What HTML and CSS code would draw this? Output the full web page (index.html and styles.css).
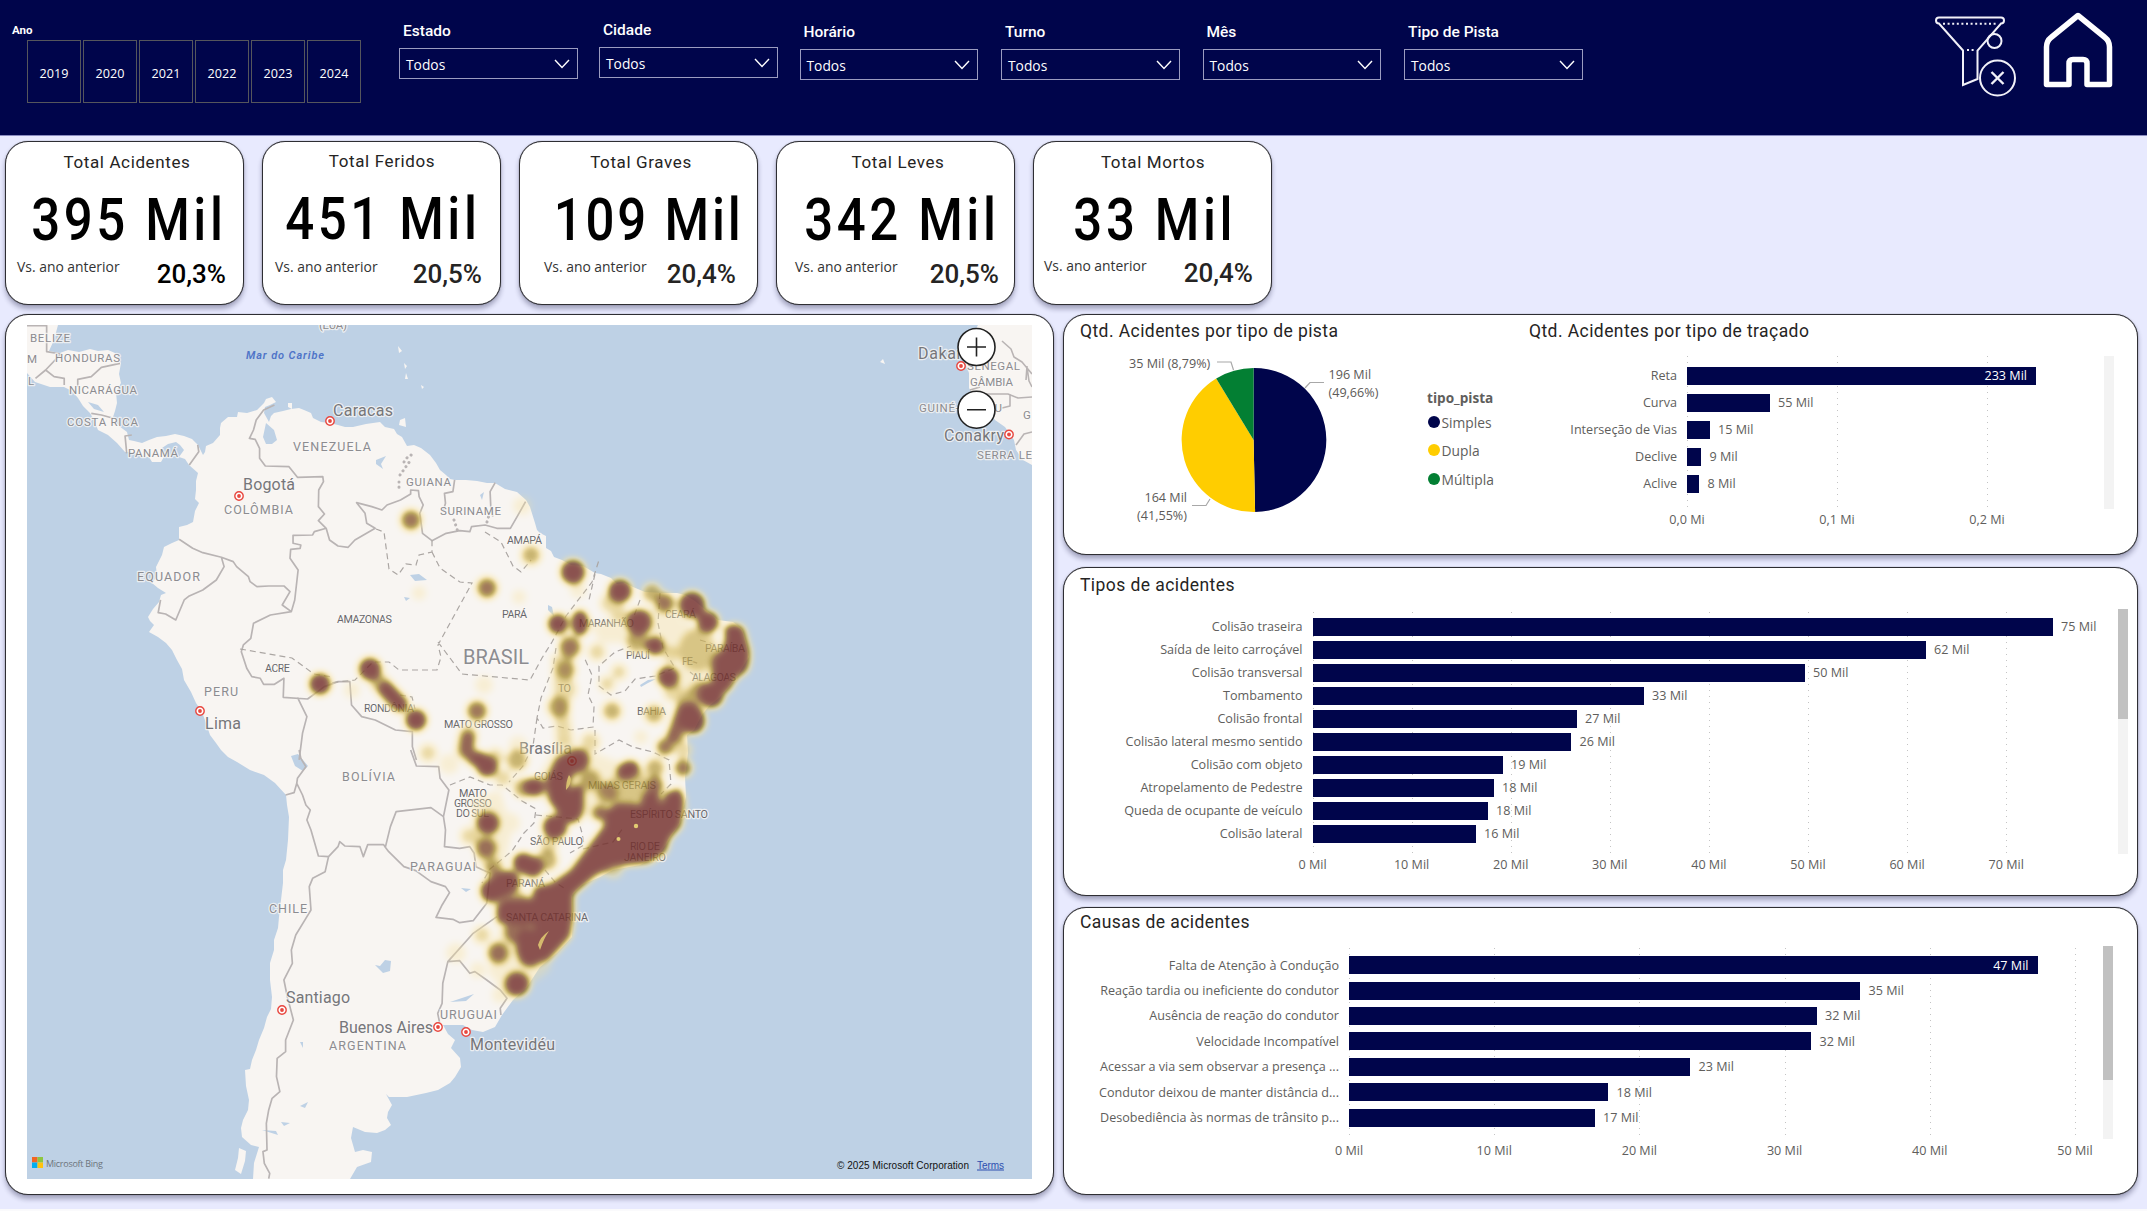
FILE: index.html
```html
<!DOCTYPE html>
<html lang="pt-BR">
<head>
<meta charset="utf-8">
<title>Acidentes</title>
<link rel="stylesheet" href="styles.css">
</head>
<body>
<header class="topbar">
  <div class="years">
    <div class="years-title">Ano</div>
    <div class="years-list"><span>2019</span><span>2020</span><span>2021</span><span>2022</span><span>2023</span><span>2024</span></div>
  </div>
  <div class="slicers">
    <div class="slicer s1"><label>Estado</label><div class="select">Todos<svg viewBox="0 0 16 10"><path d="M1 1l7 7.5L15 1"/></svg></div></div>
    <div class="slicer s2"><label>Cidade</label><div class="select">Todos<svg viewBox="0 0 16 10"><path d="M1 1l7 7.5L15 1"/></svg></div></div>
    <div class="slicer"><label>Horário</label><div class="select">Todos<svg viewBox="0 0 16 10"><path d="M1 1l7 7.5L15 1"/></svg></div></div>
    <div class="slicer"><label>Turno</label><div class="select">Todos<svg viewBox="0 0 16 10"><path d="M1 1l7 7.5L15 1"/></svg></div></div>
    <div class="slicer"><label>Mês</label><div class="select">Todos<svg viewBox="0 0 16 10"><path d="M1 1l7 7.5L15 1"/></svg></div></div>
    <div class="slicer"><label>Tipo de Pista</label><div class="select">Todos<svg viewBox="0 0 16 10"><path d="M1 1l7 7.5L15 1"/></svg></div></div>
  </div>
  <div class="actions">
    <svg class="funnel" viewBox="0 0 82 82" fill="none" stroke="#f1f1f8" stroke-width="2">
      <path d="M4 1.500H66a3 3 0 0 1 0 6L42.500 34.500V63L28 69V34.500L4 7.500a3 3 0 0 1 0-6z"/>
      <path d="M8 7.700H62M32 34H41" stroke-dasharray="2 2.600"/>
      <circle cx="59.500" cy="25" r="7"/>
      <circle cx="62.500" cy="62" r="17.500"/>
      <path d="M56.500 56l12 12M68.500 56l-12 12" stroke-width="2.400"/>
    </svg>
    <svg class="home" viewBox="0 0 70 76" fill="none" stroke="#fff" stroke-width="5.500" stroke-linejoin="round">
      <path d="M35 3.500L62 25.500Q66.500 29 66.500 35V72.500H44V51.500Q44 47.500 40 47.500H30Q26 47.500 26 51.500V72.500H3.500V35Q3.500 29 8 25.500Z"/>
    </svg>
  </div>
</header>
<main>
  <section class="kpis">
    <article class="kpi"><h2>Total Acidentes</h2><div class="big k1"><b>395 Mil</b></div><div class="foot f1"><span>Vs. ano anterior</span><strong>20,3%</strong></div></article>
    <article class="kpi k-up"><h2>Total Feridos</h2><div class="big k2"><b>451 Mil</b></div><div class="foot f2"><span>Vs. ano anterior</span><strong>20,5%</strong></div></article>
    <article class="kpi"><h2>Total Graves</h2><div class="big k3"><b>109 Mil</b></div><div class="foot f3"><span>Vs. ano anterior</span><strong>20,4%</strong></div></article>
    <article class="kpi"><h2>Total Leves</h2><div class="big k4"><b>342 Mil</b></div><div class="foot f4"><span>Vs. ano anterior</span><strong>20,5%</strong></div></article>
    <article class="kpi k-last"><h2>Total Mortos</h2><div class="big k5"><b>33 Mil</b></div><div class="foot f5"><span>Vs. ano anterior</span><strong>20,4%</strong></div></article>
  </section>
  <div class="board">
    <section class="panel map-panel">
      <svg class="map" viewBox="27 325 1005 854">
        <defs>
          <filter id="heat" x="0" y="0" width="1" height="1" color-interpolation-filters="sRGB">
            <feGaussianBlur stdDeviation="3.800"/>
            <feColorMatrix values="0 0 0 1 0  0 0 0 1 0  0 0 0 1 0  0 0 0 1 0"/>
            <feComponentTransfer>
              <feFuncR type="table" tableValues="1 .96 .86 .65 .52 .455"/>
              <feFuncG type="table" tableValues=".9 .88 .75 .54 .32 .19"/>
              <feFuncB type="table" tableValues=".6 .62 .38 .16 .20 .18"/>
              <feFuncA type="table" tableValues="0 .4 .62 .72 .8 .83"/>
            </feComponentTransfer>
          </filter>
          <g id="pin"><circle r="4.200" fill="#fff" stroke="#e8473f" stroke-width="1.400"/><circle r="1.900" fill="#e8473f"/></g>
        </defs>
        <rect x="27" y="325" width="1005" height="854" fill="#bed1e5"/>
        <g fill="#f8f5f2">
          <path d="M27 325H58L54 340 49 351 60 353 68 350 79 352 90 349 98 351 108 350 115 353 121 363 119 374 121 383 116 392 117 403 115 411 113 417 119 426 127 432 129 440 134 441 142 443 149 440 157 437 166 436 175 434 184 436 192 439 198 445 203 455 205 452 206 446 213 443 220 435 220 428 221 423 228 417 237 417 238 412 247 413 257 410 264 403 266 399 272 397 276 402 270 405 265 407 264 413 269 422 271 416 274 413 283 411 291 409 299 408 304 410 311 413 313 418 321 422 330 423 338 425 345 427 353 427 366 424 380 422 385 427 394 429 397 434 402 437 407 446 414 445 421 448 430 455 436 463 440 470 446 475 450 479 455 480 466 480 477 481 487 483 495 483 505 489 517 492 526 500 530 507 535 523 537 530 540 533 546 536 546 548 551 551 554 557 562 560 571 565 583 566 595 573 601 574 611 578 617 584 625 583 633 587 645 592 664 593 677 593 685 595 695 601 702 607 711 614 718 620 733 622 742 629 746 642 749 657 742 668 737 677 728 688 719 698 709 706 702 715 694 730 687 735 688 753 685 777 686 797 680 823 672 835 667 843 657 857 640 865 613 870 600 877 582 885 572 895 573 917 572 937 557 953 540 967 527 987 513 1000 502 1015 495 1027 483 1032 472 1030 463 1025 443 1025 448 1034 455 1040 451 1048 460 1058 461 1067 455 1077 450 1083 438 1090 426 1093 407 1097 389 1097 386 1094 392 1105 388 1112 387 1118 391 1125 385 1130 377 1133 365 1132 353 1127 351 1138 355 1152 363 1150 372 1152 371 1162 357 1167 350 1179H253L254 1163 259 1147 251 1145 242 1137 241 1128 243 1120 248 1110 249 1100 246 1086 245 1070 250 1069 252 1060 256 1050 259 1040 264 1028 267 1017 271 1009 272 997 270 980 270 963 274 950 274 940 278 928 279 917 281 900 283 883 283 870 286 860 288 840 289 817 287 805 286 795 275 783 264 775 250 770 237 762 228 757 221 750 216 743 210 735 206 723 202 712 196 703 191 692 184 680 182 669 177 660 172 650 166 643 158 637 149 632 154 625 150 621 148 617 153 609 159 602 161 595 166 593 158 588 152 583 157 576 156 567 162 555 164 547 172 543 179 540 179 527 187 525 193 522 195 511 199 503 195 499 196 490 196 481 198 473 189 465 185 459 179 457 184 450 180 445 176 442 168 444 162 448 165 455 161 462 152 462 149 457 142 457 135 452 125 452 117 443 108 435 98 430 94 420 90 413 83 406 78 398 72 391 64 387 50 387 35 382 27 373z"/>
          <path d="M978 325L969 342 964 360 969 373 969 388 973 395 978 407 988 411 995 420 1005 427 1014 440 1016 450 1023 460 1032 465V325z"/>
          <path d="M239 1148l7 3-1 10-4 13-6-4 3-12zM400 420l5-2 1 9-7-2zM288 403l4 0 0 6-4-2zM866 335l4 1M880 362l5 2-2-5zM398 346l4 5-3 2zM404 363l3 3-2 3zM406 373l2 6-3 0zM421 385l3 2-2 2z"/>
        </g>
        <g fill="#bed1e5">
          <path d="M266 423l8 7 3 10-5 4-6 0-3-7zM376 460l10-4-5 8 2 5-7-5zM480 495l4-3-2 8zM410 575l9-1 8 6-12 1zM291 756l7-2 10 12-5 5-8-5zM375 965l5 1 5-6 6 1-1 10-7 2zM548 605l4 2 2 9-6-6zM640 685l8-5 8-1-8 4-7 4zM450 1002l24-8-8 7zM300 1106l8-4-3 6zM300 1042h3v6zM281 1122l9 1-6 3zM262 1130l14 1 2 4zM88 402l10 3 6 7-10-3zM404 597l6 1-4 3zM461 888l10 1-5 3z"/>
        </g>
        <!-- country borders -->
        <g fill="none" stroke="#b9b4b4" stroke-width="5" stroke-linejoin="round">
          <g transform="translate(0 310) scale(.338 .3333)">
            <path d="M80 47H138V125L180 132 135 180 105 205M135 180L160 200 190 205V225M355 160L300 172 270 200 230 208V230M270 310L300 315 335 325M390 375L370 378 375 430M585 405L588 425 560 465"/>
            <path d="M812 285L780 300 758 330 750 360 738 385 755 388 768 415 768 445 785 468 855 470 880 502 955 500 957 515 943 540 942 590 960 612 942 632 965 655 975 690 1000 708 1030 712 1050 690 1110 655 1085 640 1080 610 1055 578 1100 590 1130 600 1145 585 1185 570 1215 552 1215 540 1238 542 1240 560 1252 585 1242 610 1250 670 1278 692 1320 670 1360 662 1390 665 1395 650 1435 645 1470 655 1510 655 1530 620 1555 575"/>
            <path d="M1345 510L1340 545 1315 550 1318 580 1312 600M1465 518L1450 545 1452 590 1458 620"/>
            <path d="M965 655L930 665 925 675 867 676V700L890 705 888 715 860 718 858 745 882 780 872 870 862 905 835 885 858 845 840 828 795 828 760 830 740 815 735 800 700 770 690 755 655 742 600 728 570 715 530 688M655 742L663 770 640 810 600 840 560 858 545 870 520 930 490 912 468 908 475 870M862 905L800 915 750 940 742 985 720 1005 714 1025 730 1075 745 1100 770 1105 780 1123 812 1123 840 1105 838 1162 910 1167 960 1130 1000 1115 1035 1115 1040 1185 1070 1220 1110 1230 1170 1260 1220 1265 1220 1310 1232 1350M880 1162L908 1220 895 1270 885 1350"/>
          </g>
          <g transform="translate(0 750) scale(.338 .3333)">
            <path d="M885 0L890 25 905 50 880 85 878 100 870 128 845 135M878 100L895 135 905 165 918 180 908 210 920 240 930 275 942 318 972 320 1000 290 1005 275 1020 288 1065 290 1075 320 1088 284 1135 284 1140 292 1155 230 1172 185 1275 173 1312 200 1328 120 1302 85 1298 50 1232 48 1215 0M1312 200L1318 240 1315 290 1360 295 1390 290 1403 310 1408 350 1450 370 1440 460 1400 512 1360 518 1340 508 1290 502 1308 465 1330 428 1318 410 1275 395 1230 362 1195 350 1150 305 1140 292M972 320L962 365 925 385 915 410 920 480 905 505 875 555 862 600 865 640 840 690 850 740 868 810 845 870 845 905 820 925 818 980 828 1025 805 1045 795 1080 788 1120 790 1200 778 1205 782 1240 798 1270 795 1286"/>
            <path d="M1470 500L1400 550 1325 635 1310 700 1308 760 1295 790 1300 815M1325 635L1360 632 1390 670 1405 665 1440 690 1480 720 1500 745 1480 775 1482 795"/>
          </g>
          <path stroke-width="1.600" d="M1002 341l9 8 3 8 8 5 10 12M1027 367l2 14 3 6M970 390l10-3M982 394h26l10 4 14-1M1010 394v12l-8 2M1016 445l8-11 8-2M1026 380l1-14"/>
        </g>
        <path d="M411 455l3 2M404 462l5-7M400 475l10-14M399 482v9M454 520l4 12M487 522l2-7" stroke="#b9b4b4" stroke-width="3" stroke-linecap="round" stroke-dasharray=".1 5"/>
        <!-- state borders -->
        <g fill="none" stroke="#aba6a3" stroke-width="1.200" stroke-dasharray="6 4">
          <path d="M376 529l8 3 5 37 9 6 8-11 10 1 3-10 13-3v-12M432 552l8 16 20 14 12 1-34 62 3 12-4 13H399l-10-8-16 0-18 18-27 3M240 649l52 9 22 16 18 3M438 642l24 32 68 6 12-22 10-16 14-26 26-34 7-22M595 574l-6 26M485 532l16 10 12 24 8 6 10-12M640 600l-6 16M660 593l-2 30 5 25 12 20-20 8-20 3-10 12-14 4-12-9 0-20 16-14 16-6M556 648l-3 20-12 30-4 20 6 10 14-2 14 4 22-3 1-20-6-12 4-20-8-18M595 730l0 24 24-14 14 7 20 5 16 8 2 24-10 10M537 718l-4 28-10 20-14 16M450 785l20-8 20 8 12 0 20 16 14 8-2 14-10 10-12 18-22 18-8 14M536 815l42 4 4 14 2 12-14 8M583 849l30-7 10-14M545 870l10 12 12 8M400 695l12 2 3 12M700 640l16 5 10 0M682 658l18 6M690 672l10 8"/>
        </g>
        <g class="country" font-size="11.500">
          <text x="30" y="342" textLength="40">BELIZE</text><text x="55" y="362" textLength="65">HONDURAS</text><text x="27" y="363" textLength="9">M</text><text x="28" y="385">L</text><text x="69" y="394" textLength="68">NICARÁGUA</text><text x="67" y="426" textLength="71">COSTA RICA</text><text x="128" y="457" textLength="50">PANAMÁ</text><text x="319" y="329" textLength="28">(EUA)</text>
          <text x="406" y="486" textLength="45">GUIANA</text><text x="440" y="515" textLength="61">SURINAME</text>
          <text x="967" y="370" textLength="53">SENEGAL</text><text x="970" y="386" textLength="43">GÂMBIA</text><text x="919" y="412" textLength="83">GUINÉ-BISSAU</text><text x="1023" y="419">G</text><text x="977" y="459" textLength="55">SERRA LE</text>
        </g>
        <g class="country" font-size="12.500">
          <text x="293" y="451" textLength="78">VENEZUELA</text><text x="224" y="514" textLength="69">COLÔMBIA</text><text x="137" y="581" textLength="63">EQUADOR</text><text x="204" y="696" textLength="34">PERU</text><text x="342" y="781" textLength="53">BOLÍVIA</text><text x="410" y="871" textLength="66">PARAGUAI</text><text x="269" y="913" textLength="38">CHILE</text><text x="329" y="1050" textLength="77">ARGENTINA</text><text x="440" y="1019" textLength="57">URUGUAI</text>
          <text x="463" y="664" font-size="20" textLength="66">BRASIL</text>
        </g>
        <g class="state">
          <text x="507" y="544" textLength="35">AMAPÁ</text><text x="337" y="623" textLength="55">AMAZONAS</text><text x="502" y="618" textLength="25">PARÁ</text><text x="265" y="672" textLength="25">ACRE</text><text x="364" y="712" textLength="50">RONDÔNIA</text><text x="444" y="728" textLength="69">MATO GROSSO</text><text x="558" y="692" textLength="13">TO</text><text x="579" y="627" textLength="55">MARANHÃO</text><text x="626" y="659" textLength="24">PIAUÍ</text><text x="665" y="618" textLength="31">CEARÁ</text><text x="705" y="652" textLength="40">PARAÍBA</text><text x="682" y="665" textLength="11">PE</text><text x="692" y="681" textLength="44">ALAGOAS</text><text x="637" y="715" textLength="29">BAHIA</text><text x="534" y="780" textLength="29">GOIÁS</text><text x="588" y="789" textLength="68">MINAS GERAIS</text><text x="630" y="818" textLength="78">ESPÍRITO SANTO</text><text x="630" y="850" textLength="30">RIO DE</text><text x="624" y="861" textLength="42">JANEIRO</text><text x="530" y="845" textLength="53">SÃO PAULO</text><text x="506" y="887" textLength="39">PARANÁ</text><text x="506" y="921" textLength="82">SANTA CATARINA</text><text x="459" y="797" textLength="28">MATO</text><text x="454" y="807" textLength="38">GROSSO</text><text x="456" y="817" textLength="33">DO SUL</text>
        </g>
        <g class="city">
          <text x="333" y="416" textLength="60">Caracas</text><text x="243" y="490" textLength="52">Bogotá</text><text x="205" y="729" textLength="36">Lima</text><text x="519" y="754" textLength="53">Brasília</text><text x="286" y="1003" textLength="64">Santiago</text><text x="339" y="1033" textLength="94">Buenos Aires</text><text x="470" y="1050" textLength="85">Montevidéu</text><text x="918" y="359" textLength="44">Dakar</text><text x="944" y="441" textLength="60">Conakry</text>
        </g>
        <text class="sea" x="246" y="359" textLength="78">Mar do Caribe</text>
        <use href="#pin" x="330" y="421"/><use href="#pin" x="239" y="496"/><use href="#pin" x="200" y="711"/><use href="#pin" x="282" y="1010"/><use href="#pin" x="438" y="1027"/><use href="#pin" x="466" y="1032"/><use href="#pin" x="572" y="761"/><use href="#pin" x="961" y="366"/><use href="#pin" x="1009" y="434.500"/>
        <!-- accident density; shade follows opacity through the filter -->
        <g filter="url(#heat)">
          <rect x="27" y="325" width="1005" height="854" fill="none"/>
          <g opacity=".18">
            <path d="M500 925l50-5 0 50-40 30-22-28zM470 800l30-10 12 40-10 45-25-10zM560 740l80 30 50 40-60 20-70-20-30-20zM590 625l70-20 40 25 20 30-20 40-25-10 5-35-40-12-40 0z"/>
            <circle cx="419" cy="593" r="7"/><circle cx="522" cy="506" r="9"/><circle cx="484" cy="685" r="9"/><circle cx="449" cy="764" r="10"/><circle cx="518" cy="745" r="9"/><circle cx="456" cy="953" r="10"/><circle cx="478" cy="970" r="8"/><circle cx="500" cy="995" r="8"/><circle cx="510" cy="823" r="10"/><circle cx="641" cy="737" r="7"/><circle cx="578" cy="590" r="8"/><circle cx="673" cy="620" r="9"/><circle cx="519" cy="597" r="7"/><circle cx="352" cy="690" r="8"/>
          </g>
          <g opacity=".36">
            <path d="M552 655l22 0-4 60 4 30-18 0-2-30zM597 790l25-20 20 0 10 25-30 15zM487 865l15 5 8 20-20 5zM520 900l30 0 0 60-25 0z"/>
            <circle cx="428" cy="753" r="9"/><circle cx="597" cy="652" r="9"/><circle cx="619" cy="672" r="8"/><circle cx="607" cy="684" r="8"/><circle cx="469" cy="836" r="9"/><circle cx="590" cy="742" r="10"/><circle cx="503" cy="778" r="9"/><circle cx="482" cy="935" r="9"/><circle cx="673" cy="692" r="10"/><circle cx="683" cy="750" r="9"/><circle cx="565" cy="689" r="12"/><circle cx="610" cy="603" r="10"/><circle cx="618" cy="612" r="9"/><circle cx="495" cy="757" r="9"/><circle cx="671" cy="655" r="9"/><ellipse cx="698" cy="650" rx="20" ry="22"/><circle cx="549" cy="845" r="9"/><circle cx="613" cy="868" r="10"/>
          </g>
          <g opacity=".55">
            <circle cx="612" cy="711" r="10"/><circle cx="654" cy="714" r="10"/><circle cx="531" cy="555" r="10"/><circle cx="566" cy="670" r="10"/><circle cx="558" cy="707" r="11"/><circle cx="517" cy="760" r="11"/><circle cx="637" cy="642" r="11"/><circle cx="652" cy="593" r="10"/><circle cx="655" cy="768" r="10"/><circle cx="607" cy="793" r="11"/><circle cx="590" cy="780" r="11"/><circle cx="493" cy="867" r="9"/><circle cx="547" cy="860" r="11"/><circle cx="523" cy="788" r="10"/><circle cx="517" cy="905" r="14"/>
            <path d="M700 690L685 705 677 735M379 682L392 696 400 704M468 735L465 750" fill="none" stroke="#000" stroke-width="18" stroke-linecap="round"/>
          </g>
          <g opacity=".78">
            <circle cx="411" cy="520" r="10.500"/><circle cx="487" cy="588" r="10.500"/><circle cx="570" cy="647" r="11"/><circle cx="665" cy="603" r="10"/><circle cx="477" cy="711" r="10.500"/><circle cx="486" cy="848" r="11"/><circle cx="683" cy="768" r="9"/><circle cx="665" cy="747" r="9"/><circle cx="655" cy="785" r="9"/><circle cx="498" cy="953" r="11"/><circle cx="600" cy="813" r="8"/><ellipse cx="516" cy="932" rx="12" ry="12"/>
            <path d="M468 738L467 750 472 758 485 765M680 720L672 738" fill="none" stroke="#000" stroke-width="13" stroke-linecap="round"/>
          </g>
          <g>
            <circle cx="320" cy="684" r="11"/><circle cx="370" cy="669" r="11.500"/><circle cx="416" cy="720" r="11"/><circle cx="573" cy="572" r="12.500"/><circle cx="620" cy="591" r="12"/><circle cx="692" cy="605" r="13.500"/><circle cx="708" cy="622" r="11"/><circle cx="639" cy="622" r="13"/><ellipse cx="580" cy="623" rx="9" ry="13"/><circle cx="558" cy="624" r="10.500"/><circle cx="655" cy="646" r="9.500"/><circle cx="668" cy="677" r="11"/>
            <path d="M724 628q10-8 20 0 3 12 6 22 1 20-7 24-8 4-11 13-12 14-20 5 0-15 0-22-1-14 7-18 8-8 5-24z"/>
            <circle cx="711" cy="695" r="13"/><ellipse cx="691" cy="718" rx="13.500" ry="16.500" transform="rotate(-30 691 718)"/>
            <circle cx="487" cy="766" r="11"/><circle cx="479" cy="759" r="8"/><ellipse cx="534" cy="787" rx="11" ry="9.500"/><circle cx="488" cy="823" r="11.500"/><circle cx="555" cy="827" r="12.500"/><path d="M523 863l10 4" stroke="#000" stroke-width="21" stroke-linecap="round"/><ellipse cx="628" cy="770" rx="12" ry="9" transform="rotate(-25 628 770)"/>
            <circle cx="517" cy="984" r="12.500"/>
            <g fill="none" stroke="#000" stroke-linecap="round" stroke-linejoin="round">
              <path stroke-width="15" d="M386 689L400 704"/>
              <path stroke-width="23" d="M578 760L565 766 557 783 560 797 571 812"/>
              <path stroke-width="14" d="M577 792V808"/>
              <path stroke-width="24" d="M492 891L508 882M508 911L535 911M528 940L530 955"/>
            </g>
            <path stroke="#000" stroke-width="7" stroke-linejoin="round" d="M617 807L643 808 647 796 655 794 660 815 669 795 678 792 681 800 678 825 667 837 663 850 647 860 613 863 593 873 570 893 570 917 567 935 547 957 528 963 519 950 523 940 535 934 540 923 500 920 500 908 533 907 537 890 553 886 573 872 607 827 609 813z"/>
          </g>
        </g>
        <g fill="#e2cc72"><circle cx="618.500" cy="839" r="2"/><circle cx="636" cy="826" r="2.200"/><path d="M540 950q4-12 9-19-9 6-11 14zM566 790q0-9 3-15 3 3 1 9-1 3-4 6z" opacity=".85"/></g>
        <g fill="#fff" stroke="#222" stroke-width="1.600"><circle cx="976.500" cy="347" r="18.500"/><circle cx="976.500" cy="409.700" r="18.500"/><path d="M967 347h19M976.500 337.500v19M967 409.700h19"/></g>
        <g class="bing"><path fill="#f26522" d="M32 1157h5.500v5.500H32z"/><path fill="#8dc63f" d="M37.500 1157H43v5.500h-5.500z"/><path fill="#00aeef" d="M32 1162.500h5.500v5.500H32z"/><path fill="#ffc20e" d="M37.500 1162.500H43v5.500h-5.500z"/><text x="46" y="1166.500" textLength="57">Microsoft Bing</text></g>
        <text class="legal" x="837" y="1168.500" textLength="132">© 2025 Microsoft Corporation</text>
        <text class="legal link" x="977" y="1168.500" textLength="27">Terms</text>
      </svg>
    </section>
    <div class="side">
      <section class="panel split">
        <div class="pie-box">
          <h3>Qtd. Acidentes por tipo de pista</h3>
          <svg class="pie" viewBox="1080 346 340 190">
            <path fill="#00054b" d="M1253.600 440V368A72 72 0 0 1 1255.100 512z"/>
            <path fill="#ffcd00" d="M1253.600 440L1255.100 512A72 72 0 0 1 1216.200 378.500z"/>
            <path fill="#037f33" d="M1253.600 440L1216.200 378.500A72 72 0 0 1 1253.600 368z"/>
            <path fill="none" stroke="#a8a8a8" stroke-width="1.200" d="M1217 362h14l2.500 8M1305 388l5-5.500h14M1192 505.500h14l4-6.500"/>
            <text x="1129" y="368">35 Mil (8,79%)</text>
            <text x="1328.500" y="379">196 Mil</text><text x="1328.500" y="397">(49,66%)</text>
            <text x="1187" y="502" text-anchor="end">164 Mil</text><text x="1187" y="520" text-anchor="end">(41,55%)</text>
          </svg>
        </div>
        <div class="legend"><b>tipo_pista</b><span><i class="navy"></i>Simples</span><span><i class="gold"></i>Dupla</span><span><i class="green"></i>Múltipla</span></div>
        <div class="trace">
          <h3>Qtd. Acidentes por tipo de traçado</h3>
          <div class="chart c1">
            <div class="lines"><i></i><i></i><i></i></div>
            <div class="rows">
              <div class="row"><span>Reta</span><u style="width:349px"><em>233 Mil</em></u></div>
              <div class="row"><span>Curva</span><u style="width:82.500px"></u><em>55 Mil</em></div>
              <div class="row"><span>Interseção de Vias</span><u style="width:22.500px"></u><em>15 Mil</em></div>
              <div class="row"><span>Declive</span><u style="width:14px"></u><em>9 Mil</em></div>
              <div class="row"><span>Aclive</span><u style="width:12px"></u><em>8 Mil</em></div>
            </div>
            <div class="axis"><span>0,0 Mi</span><span>0,1 Mi</span><span>0,2 Mi</span></div>
            <div class="scroll"></div>
          </div>
        </div>
      </section>
      <section class="panel types">
        <h3>Tipos de acidentes</h3>
        <div class="chart c2">
          <div class="lines"><i></i><i></i><i></i><i></i><i></i><i></i><i></i><i></i></div>
          <div class="rows">
            <div class="row"><span>Colisão traseira</span><u style="width:740px"></u><em>75 Mil</em></div>
            <div class="row"><span>Saída de leito carroçável</span><u style="width:613px"></u><em>62 Mil</em></div>
            <div class="row"><span>Colisão transversal</span><u style="width:492px"></u><em>50 Mil</em></div>
            <div class="row"><span>Tombamento</span><u style="width:331px"></u><em>33 Mil</em></div>
            <div class="row"><span>Colisão frontal</span><u style="width:264px"></u><em>27 Mil</em></div>
            <div class="row"><span>Colisão lateral mesmo sentido</span><u style="width:258.500px"></u><em>26 Mil</em></div>
            <div class="row"><span>Colisão com objeto</span><u style="width:190px"></u><em>19 Mil</em></div>
            <div class="row"><span>Atropelamento de Pedestre</span><u style="width:181px"></u><em>18 Mil</em></div>
            <div class="row"><span>Queda de ocupante de veículo</span><u style="width:175px"></u><em>18 Mil</em></div>
            <div class="row"><span>Colisão lateral</span><u style="width:163px"></u><em>16 Mil</em></div>
          </div>
          <div class="axis"><span>0 Mil</span><span>10 Mil</span><span>20 Mil</span><span>30 Mil</span><span>40 Mil</span><span>50 Mil</span><span>60 Mil</span><span>70 Mil</span></div>
          <div class="scroll"><div></div></div>
        </div>
      </section>
      <section class="panel causes">
        <h3>Causas de acidentes</h3>
        <div class="chart c3">
          <div class="lines"><i></i><i></i><i></i><i></i><i></i><i></i></div>
          <div class="rows">
            <div class="row"><span>Falta de Atenção à Condução</span><u style="width:688.500px"><em>47 Mil</em></u></div>
            <div class="row"><span>Reação tardia ou ineficiente do condutor</span><u style="width:511px"></u><em>35 Mil</em></div>
            <div class="row"><span>Ausência de reação do condutor</span><u style="width:467.500px"></u><em>32 Mil</em></div>
            <div class="row"><span>Velocidade Incompatível</span><u style="width:462px"></u><em>32 Mil</em></div>
            <div class="row"><span>Acessar a via sem observar a presença ...</span><u style="width:341px"></u><em>23 Mil</em></div>
            <div class="row"><span>Condutor deixou de manter distância d...</span><u style="width:259px"></u><em>18 Mil</em></div>
            <div class="row"><span>Desobediência às normas de trânsito p...</span><u style="width:245.500px"></u><em>17 Mil</em></div>
          </div>
          <div class="axis"><span>0 Mil</span><span>10 Mil</span><span>20 Mil</span><span>30 Mil</span><span>40 Mil</span><span>50 Mil</span></div>
          <div class="scroll"><div></div></div>
        </div>
      </section>
    </div>
  </div>
</main>
</body>
</html>
```
FILE: styles.css
```css
* { box-sizing: border-box; margin: 0; padding: 0; }
body {
  width: 2147px; height: 1211px; overflow: hidden;
  background: #e8eafe; color: #252423;
  font-family: "Open Sans", "Noto Sans", sans-serif;
  display: flex; flex-direction: column;
}
h2, h3, label, .years-title, .big, .foot strong { font-family: Roboto, sans-serif; }

/* top bar */
.topbar {
  height: 136px; flex: none; background: #00054b; border-bottom: 1px solid #8a8cc0;
  color: #fff; display: flex; align-items: flex-start;
}
.years { width: 399px; padding: 23px 0 0 12px; }
.years-title { font-size: 11.500px; font-weight: 700; line-height: 14px; }
.years-list { display: flex; gap: 2px; padding: 3px 0 0 15px; }
.years-list span {
  width: 54px; height: 63px; border: 1px solid #55565c; font-size: 12.600px;
  display: flex; align-items: center; justify-content: center; padding-top: 3px;
}
.slicers { display: flex; gap: 23px; padding-top: 22px; width: 1536px; }
.slicer { width: 178.500px; }
.s1 { margin-top: -1px; margin-right: -1.500px; }
.s2 { margin-top: -2px; margin-right: -1px; }
.slicer label { display: block; padding-left: 4px; font-size: 15.500px; font-weight: 500; line-height: 21px; }
.select {
  margin-top: 6px; height: 31px; border: 1.600px solid #9b9cc0; padding: 3px 7px 0 6px;
  display: flex; justify-content: space-between; align-items: center; font-size: 13.800px; line-height: 20px;
}
.select svg { width: 16px; height: 10px; margin-top: -3px; fill: none; stroke: #fff; stroke-width: 1.400; }
.actions { display: flex; }
.funnel { width: 82px; height: 82px; margin-top: 16px; }
.home { width: 70px; height: 76px; margin: 12px 0 0 26px; }

/* cards */
main { padding: 5px 9px 0 5px; flex: 1; border-bottom: 2px solid #fafafc; box-shadow: 0 1px 0 #ddd; }
.kpi, .panel {
  background: #fff; border: 1px solid #2e2e33; border-radius: 23px;
  box-shadow: 0 0 1px rgba(0,0,0,.6), 0 4px 5px rgba(20,20,60,.32);
}
.kpis { display: flex; gap: 18px; }
.kpi { width: 239px; height: 164px; padding-top: 9px; }
.kpi h2 { font-size: 17px; font-weight: 400; line-height: 22px; letter-spacing: .62px; text-align: center; padding-left: 5px; }
.big { height: 60px; margin-top: 17px; font-size: 60px; line-height: 60px; color: #000; text-align: center; white-space: nowrap; }
.big b { display: inline-block; font-weight: 500; letter-spacing: 4.200px; margin-right: -4.200px; transform: scaleX(.85); }
.k-up h2, .k-up .big { transform: translateY(-1px); }
.k-up h2, .k-last h2 { padding-left: 1px; }
.k1 { padding-left: 4px; } .k3 { padding-left: 16px; } .k4 { padding-left: 9px; } .k5 { padding-left: 1px; } .k2 { padding-right: 1px; }
.k3 b { letter-spacing: 3.300px; }
.foot { display: flex; justify-content: space-between; align-items: flex-start; margin-top: 7px; }
.foot span { font-size: 13.900px; line-height: 20px; color: #333; }
.foot strong { font-size: 26px; font-weight: 500; line-height: 30px; padding-top: 2px; white-space: nowrap; }
.f1 { padding: 0 17px 0 11px; } .f1 strong { color: #000; }
.f2 { padding: 0 18px 0 12px; }
.f3 { padding: 0 21px 0 24px; }
.f4 { padding: 0 15px 0 18px; }
.f5 { padding: 0 18px 0 10px; margin-top: 6px; }

.board { display: flex; gap: 9.500px; margin-top: 9px; }
.map-panel { width: 1048.500px; height: 881px; padding: 10px 0 0 21px; }
.map { display: block; width: 1005px; height: 854px; }
.map text { font-family: Roboto, sans-serif; paint-order: stroke; stroke: rgba(250,248,246,.75); stroke-width: 2.500px; stroke-linejoin: round; }
.country text { fill: #8c8c90; }
.state text { fill: #68676b; font-size: 10.800px; }
.city text { fill: #76767a; font-size: 16px; }
.map .sea { fill: #4f74c8; font-size: 11px; font-style: italic; font-weight: 600; stroke: none; }
.bing text { font-family: "Open Sans", sans-serif; font-size: 9px; fill: #6c747c; stroke: none; }
.map .legal { font-family: "Liberation Sans", sans-serif; font-size: 10px; fill: #111; stroke: none; }
.map .link { fill: #2c4fb0; text-decoration: underline; }

/* right column */
.side { display: flex; flex-direction: column; gap: 11.500px; width: 1075px; }
h3 { font-size: 17.500px; font-weight: 400; letter-spacing: .43px; line-height: 20px; white-space: nowrap; }
.split { height: 241px; display: flex; padding: 6px 0 0 16px; }
.types { height: 329px; padding-top: 7px; }
.types h3, .causes h3 { padding-left: 16px; }
.causes { height: 288px; padding-top: 3.500px; }
.pie-box { width: 348px; }
.pie { display: block; width: 340px; height: 190px; margin-top: 5px; font-size: 12.600px; fill: #5c5a58; overflow: visible; }
.legend { width: 101px; padding-top: 67px; display: flex; flex-direction: column; color: #605e5c; font-size: 13.800px; }
.legend b { line-height: 20px; font-size: 13.600px; margin: 0 0 1px -1px; }
.legend span { display: flex; align-items: center; height: 28.300px; line-height: 20px; gap: 1.500px; }
.legend i { width: 12px; height: 12px; border-radius: 50%; margin-top: -2px; }
.navy { background: #00054b; } .gold { background: #ffcd00; } .green { background: #037f33; }

/* bar charts */
.chart { display: grid; grid-template-columns: var(--lab) minmax(0, 1fr) 10px; grid-template-rows: var(--h) 24px; font-size: 12.600px; color: #605e5c; }
.lines { grid-area: 1 / 2; display: flex; }
.lines i { flex: none; width: var(--step); background: linear-gradient(#c4c4c4 0 1px, transparent 1px) 0 0 / 1px 6px repeat-y; }
.rows { grid-area: 1 / 1 / 2 / 3; z-index: 1; }
.row { display: flex; align-items: center; height: var(--row); white-space: nowrap; }
.row span { flex: none; width: var(--lab); padding-right: 10px; text-align: right; }
.row u { flex: none; height: 18px; background: #00054b; text-decoration: none; display: flex; align-items: center; justify-content: flex-end; }
.row em { font-style: normal; padding-left: 8.500px; }
.row u em { color: #fff; padding: 0 9px 0 0; }
.axis { grid-area: 2 / 2; display: flex; margin-left: calc(var(--step) / -2); }
.axis span { flex: none; width: var(--step); text-align: center; line-height: 22px; }
.scroll { grid-area: 1 / 3; background: #f3f3f3; }
.scroll div { background: #c1c1c1; }
.c1 { --lab: 158px; --h: 153px; --step: 150px; --row: 27.100px; width: 585px; margin-top: 15px; }
.c1 .rows { padding-top: 6px; }
.c2 { --lab: 248.500px; --h: 242px; --step: 99.100px; --row: 23px; width: 1064px; margin-top: 17px; }
.c2 .rows { padding-top: 3.500px; }
.c2 .scroll { margin-top: -3px; } .c2 .scroll div { height: 110px; }
.c3 { --lab: 285px; --h: 191px; --step: 145.200px; --row: 25.400px; width: 1049px; margin-top: 16.500px; }
.c3 .rows { padding-top: 4.500px; }
.c3 .scroll { margin-top: -2px; } .c3 .scroll div { height: 134px; }
.c3 .axis span { line-height: 24px; }
```
